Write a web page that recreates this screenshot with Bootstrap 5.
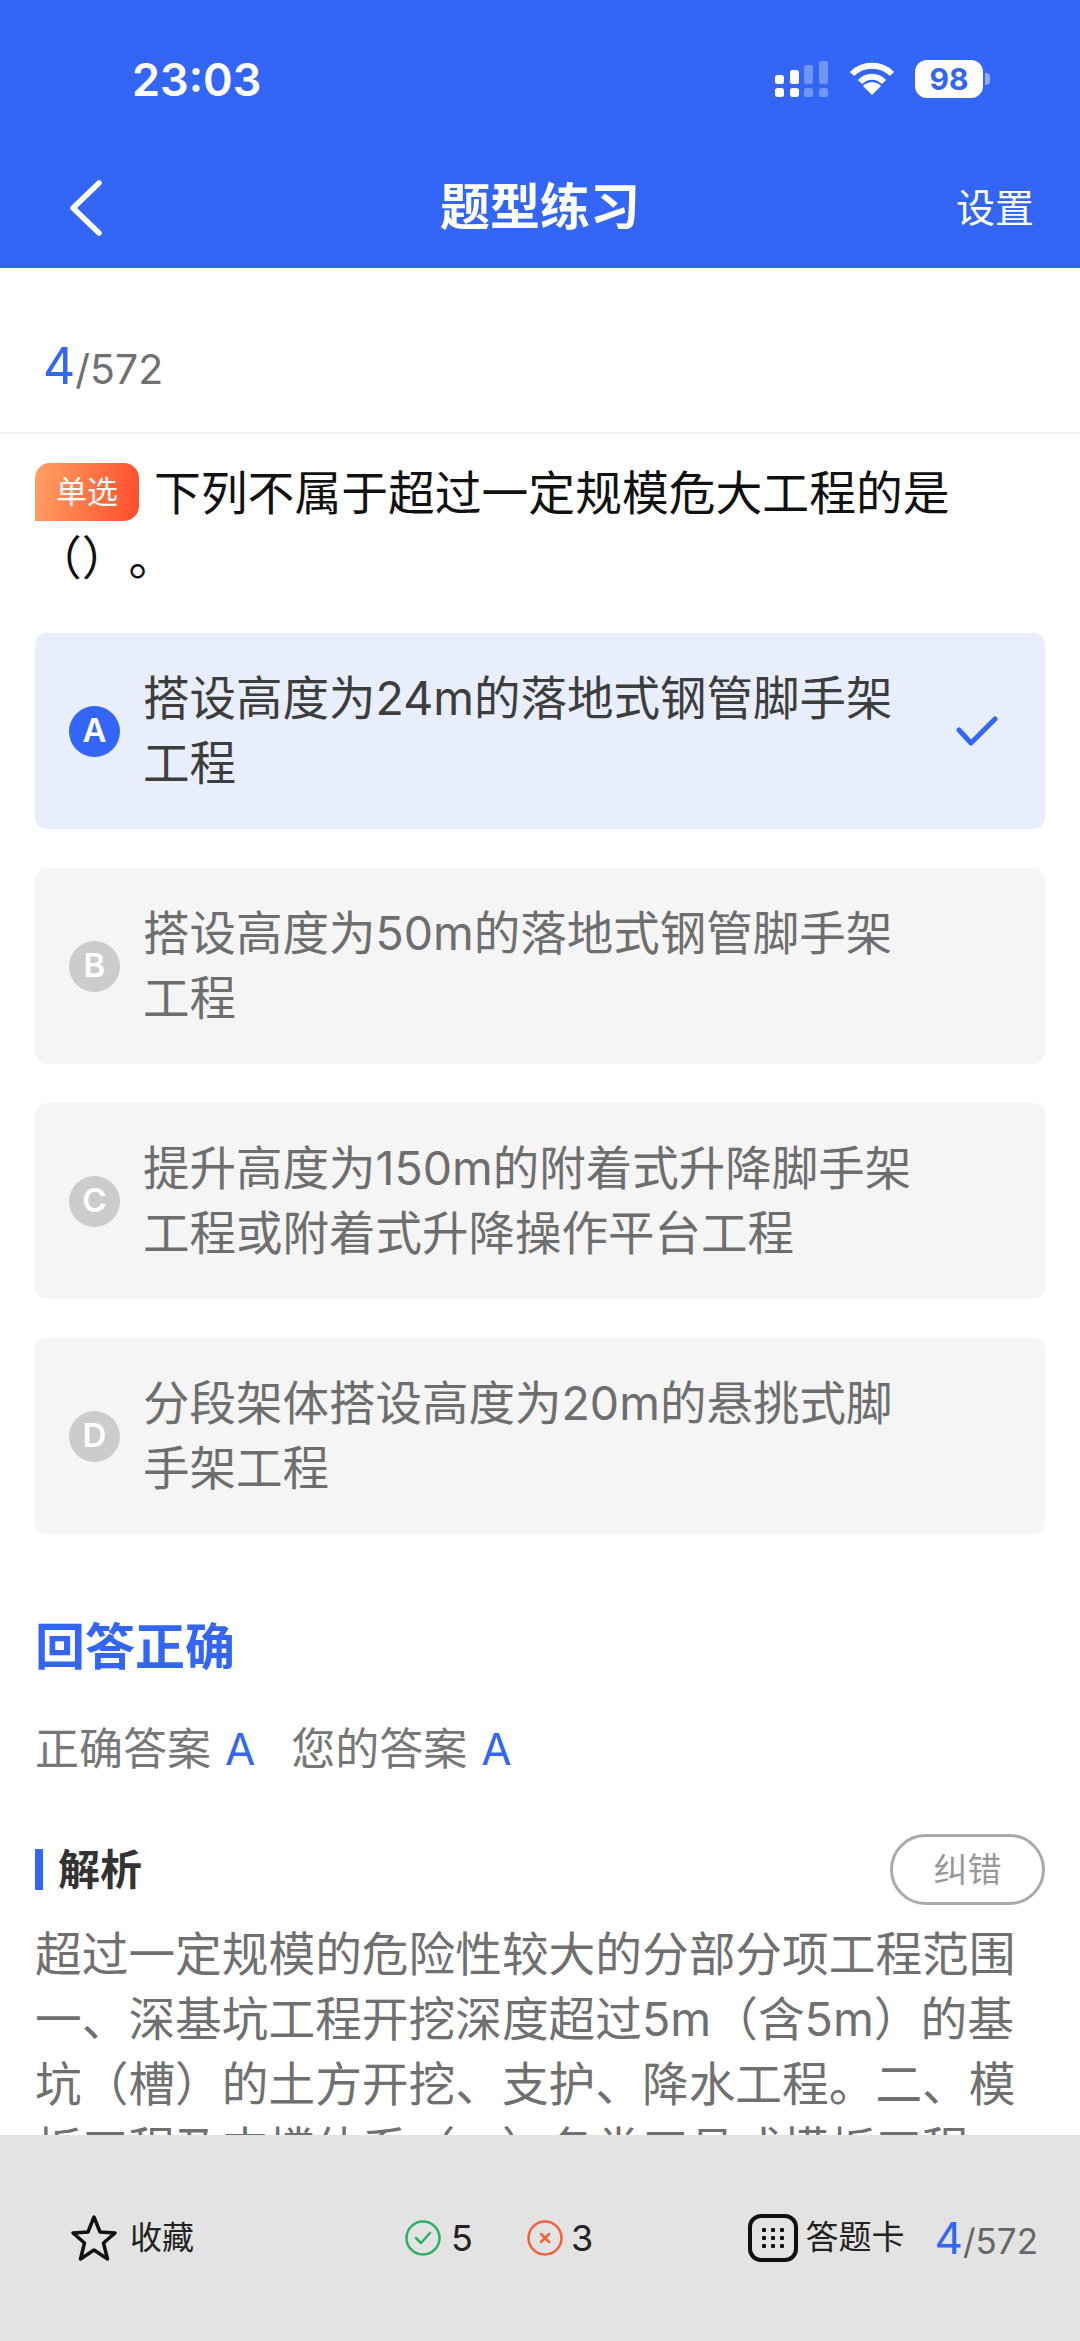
<!DOCTYPE html>
<html lang="zh-CN">
<head>
  <meta charset="UTF-8">
  <meta name="viewport" content="width=device-width, initial-scale=1.0">
  <title>题型练习</title>
  <link href="https://cdn.jsdelivr.net/npm/bootstrap@5.3.0/dist/css/bootstrap.min.css" rel="stylesheet">
  <style>
    html, body { height: 100%; }
    body {
      font-family: "Inter", "Noto Sans CJK SC", sans-serif;
      background: #fff;
      color: #333;
      overflow: hidden;
      text-spacing-trim: space-all;
    }
    .app-head { background: #3366f6; color: #fff; height: 268px; }
    .status-row { height: 138px; padding: 60px 0 0 132px; }
    .status-time { font-size: 45px; font-weight: 600; line-height: 40px; width: 643px; }
    .sig-icon { margin-right: 21px; }
    .wifi-icon { margin-right: 20px; }
    .batt-box { width: 68px; height: 38px; border-radius: 12px; background: #fff; color: #3366f6; font-size: 30px; font-weight: 700; line-height: 38px; text-align: center; }
    .batt-tip { width: 5px; height: 12px; background: rgba(255,255,255,.45); border-radius: 0 4px 4px 0; margin-left: 2px; }
    .nav-row { height: 130px; padding-top: 8px; }
    .nav-side { width: 150px; }
    .nav-back { margin: 1px 0 0 70px; }
    .nav-title { font-size: 50px; font-weight: 700; line-height: 1; }
    .nav-set { font-size: 39px; padding-right: 46px; line-height: 1; }
    .count-row { height: 166px; border-bottom: 2px solid #f2f2f2; padding: 66px 0 0 43px; line-height: 64px; }
    .num-now { color: #3366f6; font-size: 50px; }
    .num-all { color: #707070; font-size: 41px; }
    .page-body { padding: 27px 35px 0; }
    .ques-text { font-size: 46.800px; line-height: 65px; color: #111; margin: 0 0 42px; }
    .type-tag {
      display: inline-block; width: 104px; height: 58px; line-height: 58px;
      margin: 2px 15px 0 0; vertical-align: top; text-align: center;
      font-size: 31px; color: #fff;
      background: linear-gradient(100deg, #ffa264, #ff4c2b);
      border-radius: 15px 15px 15px 0;
    }
    .opt-row { height: 196px; background: #f5f5f5; border-radius: 12px; margin-bottom: 39px; padding-left: 34px; color: #6e6e6e; }
    .opt-row.picked { background: #e9eefd; color: #3d3d3d; }
    .opt-dot { width: 51px; height: 51px; flex: none; background: #ccc; color: #fff; font-size: 33px; font-weight: 600; margin-right: 23px; }
    .picked .opt-dot { background: #3366f6; }
    .opt-text { width: 783px; font-size: 46.500px; line-height: 65px; }
    .opt-check { margin-left: 30px; }
    .res-title { color: #3366f6; font-size: 50px; font-weight: 700; line-height: 60px; margin: 83px 0 42px; }
    .res-line { font-size: 44px; line-height: 60px; color: #777; }
    .res-line b { font-weight: 400; color: #3366f6; margin: 0 36px 0 14px; }
    .ana-head { margin-top: 55px; height: 71px; }
    .ana-name { border-left: 8px solid #3366f6; height: 41px; line-height: 41px; padding-left: 15px; font-size: 42px; font-weight: 700; color: #333; }
    .fix-btn { width: 155px; height: 71px; border: 3px solid #aaa; border-radius: 36px; color: #999; font-size: 34px; line-height: 1; padding: 0; background: transparent; }
    .ana-text { font-size: 46.700px; line-height: 65px; color: #707070; margin: 17px 0 0; }
    .page-main { min-height: 0; }
    .tool-bar { height: 206px; background: #e3e3e3; flex: none; padding: 0 42px 0 70px; color: #222; font-size: 32px; }
    .tool-mid { margin-left: 211px; font-size: 36px; }
    .stat-ok { margin: 0 54px 0 10px; }
    .tool-right { margin-left: auto; }
    .card-label { font-size: 33px; }
    .bar-now { color: #3366f6; font-size: 44px; margin-left: 30px; }
    .bar-all { color: #666; font-size: 35px; }
  </style>
</head>
<body class="d-flex flex-column">
  <header class="app-head flex-shrink-0">
    <div class="status-row d-flex align-items-start">
      <div class="status-time">23:03</div>
      <div class="d-flex align-items-center">
        <svg width="53" height="36" viewBox="0 0 53 36" class="sig-icon" fill="#fff">
          <rect x="0" y="14" width="9" height="9" rx="2.500"/><rect x="15" y="9" width="9" height="14" rx="2.500"/>
          <rect x="0" y="27" width="9" height="9" rx="2.500"/><rect x="15" y="27" width="9" height="9" rx="2.500"/>
          <g opacity=".3"><rect x="29" y="4" width="9" height="19" rx="2.500"/><rect x="44" y="0" width="9" height="23" rx="2.500"/>
          <rect x="29" y="27" width="9" height="9" rx="2.500"/><rect x="44" y="27" width="9" height="9" rx="2.500"/></g>
        </svg>
        <svg width="46" height="34" viewBox="0 0 46 34" class="wifi-icon" fill="none" stroke="#fff" stroke-width="6">
          <path d="M3 12C14 1 32 1 43 12"/><path d="M11 20C18 13 28 13 35 20"/>
          <path d="M14 24L23 33L32 24C27 19 19 19 14 24Z" fill="#fff" stroke="none"/>
        </svg>
        <div class="batt-box">98</div>
        <div class="batt-tip"></div>
      </div>
    </div>
    <div class="nav-row d-flex align-items-center">
      <div class="nav-side d-flex">
        <svg class="nav-back" width="32" height="56" viewBox="0 0 32 56" fill="none" stroke="#fff" stroke-width="5.500" stroke-linecap="round" stroke-linejoin="round">
          <path d="M29 3L3 28L29 53"/>
        </svg>
      </div>
      <div class="nav-title flex-grow-1 text-center">题型练习</div>
      <div class="nav-side nav-set text-end">设置</div>
    </div>
  </header>

  <main class="page-main flex-grow-1 overflow-hidden">
    <div class="count-row"><span class="num-now d-inline-block">4</span><span class="num-all d-inline-block">/572</span></div>
    <div class="page-body">
      <p class="ques-text"><span class="type-tag">单选</span>下列不属于超过一定规模危大工程的是（）。</p>

      <div class="opt-row picked d-flex align-items-center">
        <div class="opt-dot rounded-circle d-flex align-items-center justify-content-center">A</div>
        <div class="opt-text">搭设高度为24m的落地式钢管脚手架工程</div>
        <svg class="opt-check" width="42" height="30" viewBox="0 0 42 30" fill="none" stroke="#3366f6" stroke-width="5" stroke-linecap="round" stroke-linejoin="round"><path d="M3 14L15 27L39 3"/></svg>
      </div>
      <div class="opt-row d-flex align-items-center">
        <div class="opt-dot rounded-circle d-flex align-items-center justify-content-center">B</div>
        <div class="opt-text">搭设高度为50m的落地式钢管脚手架工程</div>
      </div>
      <div class="opt-row d-flex align-items-center">
        <div class="opt-dot rounded-circle d-flex align-items-center justify-content-center">C</div>
        <div class="opt-text">提升高度为150m的附着式升降脚手架工程或附着式升降操作平台工程</div>
      </div>
      <div class="opt-row d-flex align-items-center">
        <div class="opt-dot rounded-circle d-flex align-items-center justify-content-center">D</div>
        <div class="opt-text">分段架体搭设高度为20m的悬挑式脚手架工程</div>
      </div>

      <div class="res-title">回答正确</div>
      <div class="res-line">正确答案<b>A</b>您的答案<b>A</b></div>

      <div class="ana-head d-flex justify-content-between align-items-center">
        <div class="ana-name">解析</div>
        <button type="button" class="btn fix-btn">纠错</button>
      </div>
      <p class="ana-text">超过一定规模的危险性较大的分部分项工程范围一、深基坑工程开挖深度超过5m（含5m）的基坑（槽）的土方开挖、支护、降水工程。二、模板工程及支撑体系（一）各类工具式模板工程</p>
    </div>
  </main>

  <footer class="tool-bar d-flex align-items-center">
    <div class="d-flex align-items-center">
      <svg width="48" height="48" viewBox="0 0 48 48" fill="none" stroke="#111" stroke-width="3.500" stroke-linejoin="round" class="me-2">
        <path d="M24 3L30 18L45 19L33.500 29L37.500 45L24 36L10.500 45L14.500 29L3 19L18 18Z"/>
      </svg>
      <span class="ms-1">收藏</span>
    </div>
    <div class="tool-mid d-flex align-items-center">
      <svg width="36" height="36" viewBox="0 0 36 36" fill="none" stroke="#2fae66" stroke-width="2.500" stroke-linecap="round" stroke-linejoin="round"><circle cx="18" cy="18" r="16.500"/><path d="M11 18L16 23L25 13"/></svg>
      <span class="stat-ok">5</span>
      <svg width="36" height="36" viewBox="0 0 36 36" fill="none" stroke="#f0623c" stroke-width="2.500" stroke-linecap="round"><circle cx="18" cy="18" r="16.500"/><path d="M14 14L22 22M22 14L14 22"/></svg>
      <span class="ms-2">3</span>
    </div>
    <div class="tool-right d-flex align-items-center">
      <svg width="50" height="48" viewBox="0 0 50 48" fill="none" class="me-2">
        <rect x="2" y="2" width="46" height="44" rx="11" stroke="#111" stroke-width="4"/>
        <g fill="#111"><rect x="14" y="14" width="4" height="4" rx="1"/><rect x="23" y="14" width="4" height="4" rx="1"/><rect x="32" y="14" width="4" height="4" rx="1"/>
        <rect x="14" y="22" width="4" height="4" rx="1"/><rect x="23" y="22" width="4" height="4" rx="1"/><rect x="32" y="22" width="4" height="4" rx="1"/>
        <rect x="14" y="30" width="4" height="4" rx="1"/><rect x="23" y="30" width="4" height="4" rx="1"/><rect x="32" y="30" width="4" height="4" rx="1"/></g>
      </svg>
      <span class="card-label">答题卡</span>
      <span><span class="bar-now">4</span><span class="bar-all">/572</span></span>
    </div>
  </footer>

  <script src="https://cdn.jsdelivr.net/npm/bootstrap@5.3.0/dist/js/bootstrap.bundle.min.js"></script>
</body>
</html>
